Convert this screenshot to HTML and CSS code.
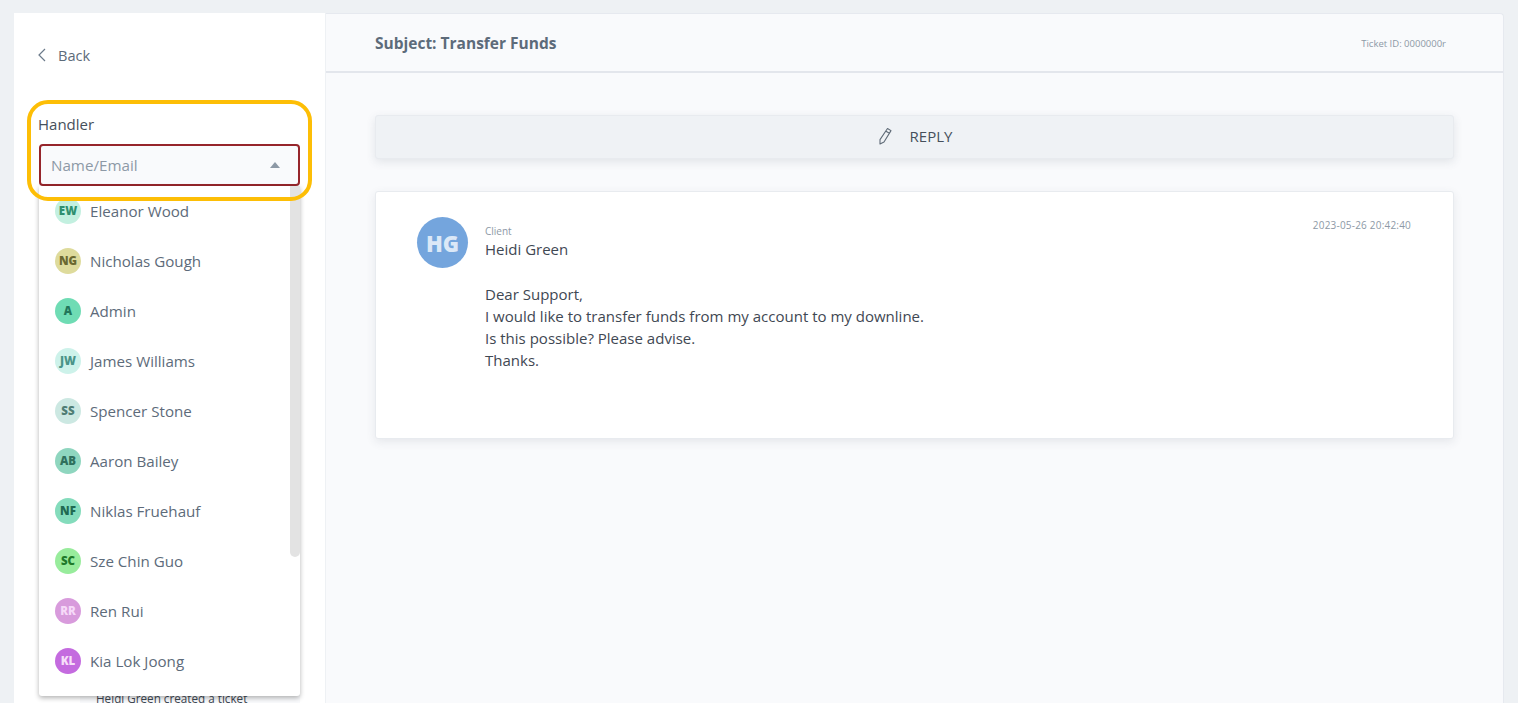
FILE: index.html
```html
<!DOCTYPE html>
<html lang="en">
<head>
<meta charset="utf-8">
<title>Ticket</title>
<link rel="stylesheet" href="styles.css">
</head>
<body>
<div class="page">
  <aside class="side">
    <a class="back">
      <svg class="back-ico" width="10" height="14" viewBox="0 0 10 14"><path d="M8 1 L2 7 L8 13" fill="none" stroke="#6b7a8a" stroke-width="1.2"/></svg>
      <span>Back</span>
    </a>
    <div class="handler">
      <label class="h-label">Handler</label>
      <div class="h-input">
        <span>Name/Email</span>
        <i class="caret"></i>
      </div>
    </div>
    <div class="log"><span>Heidi Green created a ticket</span></div>
  </aside>
  <main class="main">
    <header class="head">
      <h1>Subject: Transfer Funds</h1>
      <span class="tid">Ticket ID: 0000000r</span>
    </header>
    <div class="body">
      <div class="reply">
        <svg width="16" height="18" viewBox="0 0 16 18"><path d="M10.5 1.5 L14 3.6 L7 15 L3 17 L3 12.6 Z M9 4.2 L12.4 6.3" fill="none" stroke="#5f6b77" stroke-width="1.1" stroke-linejoin="round"/></svg>
        <span>REPLY</span>
      </div>
      <article class="msg">
        <div class="av">HG</div>
        <div class="msg-main">
          <div class="role">Client</div>
          <div class="name">Heidi Green</div>
          <p class="text">Dear Support,<br>I would like to transfer funds from my account to my downline.<br>Is this possible? Please advise.<br>Thanks.</p>
        </div>
        <time>2023-05-26 20:42:40</time>
      </article>
    </div>
  </main>
</div>
<div class="menu">
  <div class="thumb"></div>
  <div class="opt"><b class="c1">EW</b>Eleanor Wood</div>
  <div class="opt"><b class="c2">NG</b>Nicholas Gough</div>
  <div class="opt"><b class="c3">A</b>Admin</div>
  <div class="opt"><b class="c4">JW</b>James Williams</div>
  <div class="opt"><b class="c5">SS</b>Spencer Stone</div>
  <div class="opt"><b class="c6">AB</b>Aaron Bailey</div>
  <div class="opt"><b class="c7">NF</b>Niklas Fruehauf</div>
  <div class="opt"><b class="c8">SC</b>Sze Chin Guo</div>
  <div class="opt"><b class="c9">RR</b>Ren Rui</div>
  <div class="opt"><b class="c10">KL</b>Kia Lok Joong</div>
</div>
<div class="ring"></div>
</body>
</html>
```
FILE: styles.css
```css
* { box-sizing: border-box; }
html, body { height: 100%; }
body {
  margin: 0;
  background: #eef1f4;
  font-family: "Open Sans", "Noto Sans", sans-serif;
  overflow: hidden;
  color: #3f4853;
}
.page {
  display: flex;
  height: 703px;
  padding: 13px 14px 0 14px;
  gap: 1px;
}
.side {
  width: 311px;
  background: #fff;
  padding: 33px 25px 0;
  flex: none;
  display: flex;
  flex-direction: column;
}
.back { display: flex; align-items: center; gap: 11px; height: 18px; font-size: 14.6px; color: #5d6b7a; margin-left: -2px; }
.handler { margin-top: 50px; }
.h-label { display: block; font-size: 15px; line-height: 20px; color: #46505b; margin-left: -1px; }
.h-input {
  margin-top: 10px;
  height: 42px;
  width: 261px;
  border: 2px solid #96252b;
  border-radius: 4px;
  background: #f9fafc;
  display: flex;
  align-items: center;
  justify-content: space-between;
  padding: 0 18px 0 10px;
  font-size: 15.2px;
  color: #8d99a6;
}
.caret { width: 0; height: 0; border: 5.5px solid transparent; border-top: 0; border-bottom: 6px solid #8d99a6; }
.log { margin-top: auto; margin-left: 41px; height: 9px; padding-left: 16px; overflow: visible; background: #f9fafc; font-size: 11.7px; line-height: 14px; color: #3f4853; white-space: nowrap; }
.log span { position: relative; top: -3px; }
.main {
  flex: 1;
  background: #f9fafc;
  border-radius: 0 4px 0 0;
  border: 1px solid #e6e9ef;
  border-left: 0;
  border-bottom: 0;
  min-width: 0;
}
.head {
  height: 59px;
  border-bottom: 2px solid #e3e6ec;
  display: flex;
  align-items: center;
  justify-content: space-between;
  padding: 1px 57px 0 49px;
}
.head h1 { margin: 0; font-size: 15.5px; font-weight: 700; color: #5d6b7a; }
.tid { font-size: 9.5px; color: #8d99a6; }
.body { padding: 42px 49px 0; }
.reply {
  height: 44px;
  background: #eff2f5;
  border: 1px solid #e8ebef;
  border-radius: 3px;
  box-shadow: 0 3px 10px rgba(60,70,90,.12);
  display: flex;
  align-items: center;
  justify-content: center;
  gap: 17px;
  font-size: 15px;
  color: #46505b;
  padding-bottom: 2px;
}
.msg {
  margin-top: 32px;
  height: 248px;
  background: #fff;
  border: 1px solid #e8ebef;
  border-radius: 3px;
  box-shadow: 0 3px 10px rgba(60,70,90,.1);
  padding: 25px 42px 0 41px;
  display: flex;
}
.av {
  width: 51px; height: 51px; border-radius: 50%;
  background: #74a5dd; color: #dbe8f7;
  font-weight: 800; font-size: 22px;
  display: flex; align-items: center; justify-content: center;
  flex: none;
}
.msg-main { margin-left: 17px; flex: 1; }
.role { font-size: 10px; line-height: 12px; color: #8d99a6; margin-top: 8px; }
.name { font-size: 15px; line-height: 22px; color: #3f4853; margin-top: 1px; }
.text { margin: 23px 0 0; font-size: 15.03px; line-height: 22px; color: #3f4853; }
time { font-size: 10px; color: #8d99a6; margin-top: 1px; letter-spacing: .2px; }
.menu {
  position: absolute;
  left: 39px; top: 186px;
  width: 261px; height: 510px;
  background: #fff;
  border-radius: 0 0 3px 3px;
  box-shadow: 0 2px 5px rgba(0,0,0,.3);
  overflow: hidden;
}
.thumb { position: absolute; right: 0; top: 0; width: 10px; height: 371px; background: #e3e3e3; border-radius: 0 0 5px 5px; }
.opt { display: flex; align-items: center; height: 50px; font-size: 15.15px; color: #5d6b7a; padding-left: 16px; gap: 9px; line-height: 20px; }
.opt b { width: 26px; height: 26px; border-radius: 50%; display: flex; align-items: center; justify-content: center; font-size: 11.5px; font-weight: 800; flex: none; }
.c1 { background: #c3f0e0; color: #2f8f6f; }
.c2 { background: #dedb9c; color: #6a6830; }
.c3 { background: #6fdcb4; color: #22765a; }
.c4 { background: #cdf2ea; color: #4a9488; }
.c5 { background: #cce8e2; color: #4f7d74; }
.c6 { background: #8fd6bf; color: #2f6f5c; }
.c7 { background: #84dcbc; color: #1f6a52; }
.c8 { background: #98ec9c; color: #1f7a2a; }
.c9 { background: #d89bdc; color: #f6d9f8; }
.c10 { background: #c46bdf; color: #f6dff9; }
.ring {
  position: absolute;
  left: 27px; top: 100px;
  width: 285px; height: 101px;
  border: 4px solid #fdbe06;
  border-radius: 21px;
  pointer-events: none;
}
```
